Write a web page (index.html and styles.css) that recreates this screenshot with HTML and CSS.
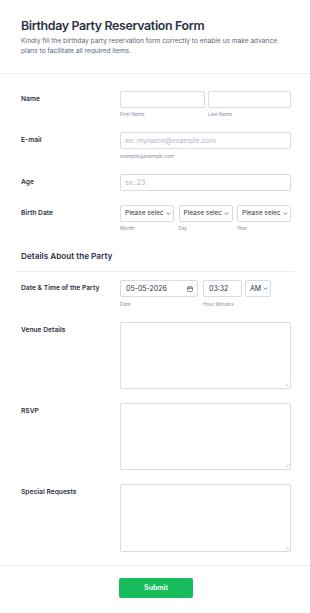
FILE: index.html
```html
<!DOCTYPE html>
<html>
<head>
<meta charset="utf-8">
<link rel="stylesheet" href="styles.css">
</head>
<body>
<div class="form">
  <header class="head">
    <h1 class="title">Birthday Party Reservation Form</h1>
    <p class="subtitle">Kindly fill the birthday party reservation form correctly to enable us make advance plans to facilitate all required items.</p>
  </header>

  <div class="fields">
    <div class="row">
      <div class="label">Name</div>
      <div class="control">
        <div class="grid2">
          <div><input class="input" type="text"><div class="sub">First Name</div></div>
          <div><input class="input" type="text"><div class="sub">Last Name</div></div>
        </div>
      </div>
    </div>

    <div class="row">
      <div class="label">E-mail</div>
      <div class="control">
        <input class="input" type="text" placeholder="ex: myname@example.com">
        <div class="sub">example@example.com</div>
      </div>
    </div>

    <div class="row">
      <div class="label">Age</div>
      <div class="control">
        <input class="input" type="text" placeholder="ex: 23">
      </div>
    </div>

    <div class="row">
      <div class="label">Birth Date</div>
      <div class="control">
        <div class="grid3">
          <div class="cell">
            <div class="select"><span class="seltext">Please selec</span><svg class="chev" viewBox="0 0 8 5" width="5" height="3"><path d="M1 1l3 3 3-3" fill="none" stroke="#2c3345" stroke-width="1"/></svg></div>
            <div class="sub">Month</div>
          </div>
          <div class="cell">
            <div class="select"><span class="seltext">Please selec</span><svg class="chev" viewBox="0 0 8 5" width="5" height="3"><path d="M1 1l3 3 3-3" fill="none" stroke="#2c3345" stroke-width="1"/></svg></div>
            <div class="sub">Day</div>
          </div>
          <div class="cell">
            <div class="select"><span class="seltext">Please selec</span><svg class="chev" viewBox="0 0 8 5" width="5" height="3"><path d="M1 1l3 3 3-3" fill="none" stroke="#2c3345" stroke-width="1"/></svg></div>
            <div class="sub">Year</div>
          </div>
        </div>
      </div>
    </div>

    <div class="section">
      <h2 class="section-title">Details About the Party</h2>
    </div>

    <div class="row">
      <div class="label">Date &amp; Time of the Party</div>
      <div class="control">
        <div class="datetime">
          <div class="dt-date">
            <div class="box datebox"><span>05-05-2026</span><svg class="cal" viewBox="0 0 8 8" width="6" height="6"><rect x="0.75" y="1.25" width="6.5" height="6" rx="1" fill="none" stroke="#2c3345" stroke-width="0.8"/><path d="M0.75 3.2h6.5M2.5 0.3v1.8M5.5 0.3v1.8" stroke="#2c3345" stroke-width="0.8"/></svg></div>
            <div class="sub">Date</div>
          </div>
          <div class="dt-time">
            <div class="box timebox">03:32</div>
            <div class="sub">Hour Minutes</div>
          </div>
          <div class="dt-ampm">
            <div class="box ampmbox"><span>AM</span><svg class="chev" viewBox="0 0 8 5" width="5" height="3"><path d="M1 1l3 3 3-3" fill="none" stroke="#2c3345" stroke-width="1"/></svg></div>
          </div>
        </div>
      </div>
    </div>

    <div class="row">
      <div class="label">Venue Details</div>
      <div class="control"><div class="ta-wrap"><textarea class="textarea"></textarea><svg class="grip" viewBox="0 0 4 4" width="4" height="4"><path d="M0.5 3.5L3.5 0.5M2 3.5L3.5 2" stroke="#b9bccb" stroke-width="0.6"/></svg></div></div>
    </div>

    <div class="row">
      <div class="label">RSVP</div>
      <div class="control"><div class="ta-wrap"><textarea class="textarea"></textarea><svg class="grip" viewBox="0 0 4 4" width="4" height="4"><path d="M0.5 3.5L3.5 0.5M2 3.5L3.5 2" stroke="#b9bccb" stroke-width="0.6"/></svg></div></div>
    </div>

    <div class="row last">
      <div class="label">Special Requests</div>
      <div class="control"><div class="ta-wrap"><textarea class="textarea tall"></textarea><svg class="grip" viewBox="0 0 4 4" width="4" height="4"><path d="M0.5 3.5L3.5 0.5M2 3.5L3.5 2" stroke="#b9bccb" stroke-width="0.6"/></svg></div></div>
    </div>
  </div>

  <div class="actions">
    <button class="submit" type="button">Submit</button>
  </div>
</div>
</body>
</html>
```

FILE: styles.css
```css
* { box-sizing: border-box; }
html, body { margin: 0; padding: 0; background: #ffffff; }
body {
  font-family: Inter, "Noto Sans", "Liberation Sans", sans-serif;
  color: #2c3345;
}
.form { width: 310px; }

.head {
  padding: 16.5px 19px 17px 21px;
  border-bottom: 1px solid #eceef4;
}
.title {
  margin: 0;
  font-size: 12.4px;
  line-height: 17px;
  font-weight: 600;
  letter-spacing: -0.35px;
  color: #2c3345;
}
.subtitle {
  margin: 2.5px 0 0 0;
  font-size: 6.6px;
  line-height: 10px;
  color: #57647e;
}

.fields { padding: 9.5px 19px 3px 21px; }

.row {
  display: flex;
  padding: 7px 0;
}
.row.last { padding-bottom: 10px; }
.label {
  width: 99px;
  flex: none;
  font-size: 6.7px;
  line-height: 17px;
  font-weight: 600;
  color: #2c3345;
}
.control { flex: 1; min-width: 0; }

.input, .box, .select {
  display: block;
  width: 100%;
  height: 17px;
  border: 1px solid #d8dae6;
  border-radius: 2px;
  background: #fff;
  font-family: Inter, "Noto Sans", sans-serif;
  font-size: 7px;
  color: #2c3345;
  padding: 0 4px;
  outline: none;
  margin: 0;
}
.input::placeholder { color: #b3b6c6; }

.sub {
  margin-top: 3.5px;
  font-size: 4.8px;
  line-height: 7px;
  color: #8a8fa5;
}

.grid2 {
  display: grid;
  grid-template-columns: 85px minmax(0, 1fr);
  gap: 3px;
}
.grid3 {
  display: grid;
  grid-template-columns: repeat(3, minmax(0, 1fr));
  gap: 4.5px;
}
.cell { min-width: 0; }

.select, .box {
  display: flex;
  align-items: center;
  white-space: nowrap;
  overflow: hidden;
}
.select { padding: 0 4px 0 4px; justify-content: space-between; }
.seltext {
  white-space: nowrap;
  font-size: 6.5px;
}
.chev { flex: none; margin-left: 2px; }

.section {
  margin-top: 7px;
  padding: 5px 0 10px 0;
  margin-left: -6px;
  margin-right: -4px;
  padding-left: 6px;
  border-bottom: 1px solid #eceef4;
}
.section-title {
  margin: 0;
  font-size: 8.2px;
  line-height: 10px;
  font-weight: 600;
  color: #2c3345;
}
.section + .row { padding-top: 8px; }

.datetime { display: flex; }
.dt-date { width: 78px; margin-right: 5px; }
.dt-time { width: 39px; margin-right: 3px; }
.dt-ampm { width: 26px; }
.datebox { justify-content: space-between; padding: 0 4px 0 5px; }
.timebox { padding: 0 5px; }
.ampmbox { padding: 0 3px 0 4px; justify-content: space-between; }

.ta-wrap { position: relative; }
.textarea {
  display: block;
  width: 100%;
  height: 67px;
  border: 1px solid #d8dae6;
  border-radius: 2px;
  margin: 0;
  padding: 4px;
  font-family: Inter, sans-serif;
  font-size: 7px;
  resize: none;
  outline: none;
}
.textarea.tall { height: 68px; }
.grip { position: absolute; right: 2px; bottom: 2px; }

.actions {
  border-top: 1px solid #eceef4;
  padding: 12px 19px 0 21px;
  display: flex;
  justify-content: center;
}
.submit {
  width: 74px;
  height: 20px;
  border: none;
  border-radius: 2px;
  background: #18bd5b;
  color: #fff;
  font-family: Inter, sans-serif;
  font-size: 7px;
  font-weight: 600;
  padding: 0;
}
```
